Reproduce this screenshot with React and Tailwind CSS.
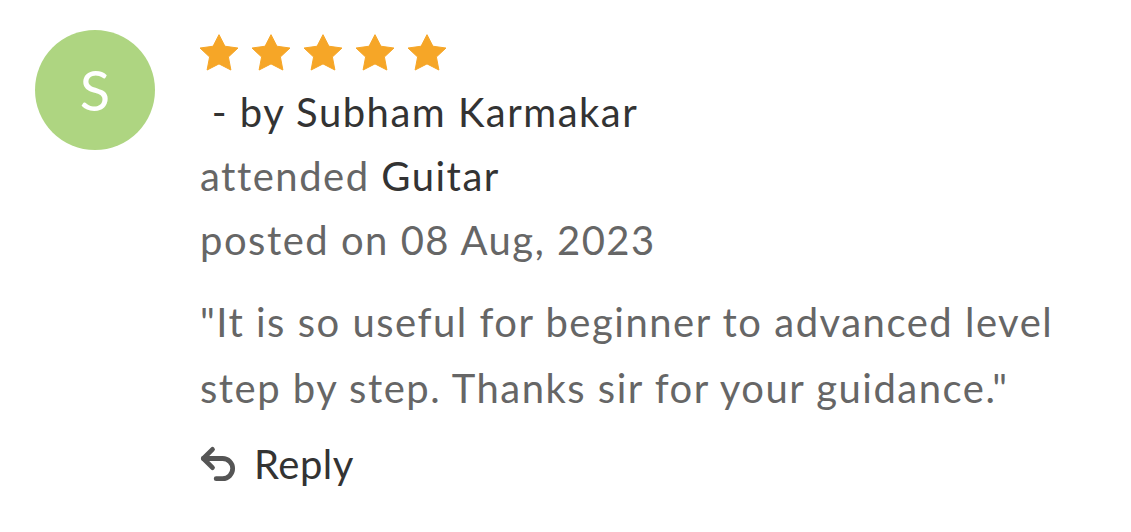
import React from "react";

function Star() {
  return (
    <svg width="40" height="38" viewBox="0 0 24 23" className="shrink-0">
      <path d="M12 0.4l3.6 7 7.9 1.1-5.8 5.4 1.5 7.9L12 18.1l-7.2 3.7 1.5-7.9L0.5 8.5l7.9-1.1z" fill="#f6a627" strokeLinejoin="round" stroke="#f6a627" strokeWidth="0.6" />
    </svg>
  );
}

export default function App() {
  return (
    <div className="w-[1131px] h-[532px] bg-white flex items-start pl-[35px] pt-[30px] gap-[45px]" style={{ fontFamily: "Lato, 'Liberation Sans', sans-serif" }}>
      <div className="w-[120px] h-[120px] rounded-full bg-[#aed581] flex items-center justify-center text-white text-[56px] font-normal shrink-0">
        S
      </div>
      <div className="flex flex-col tracking-[1.5px]">
        <div className="flex gap-[12px] mt-[4px] h-[40px] -ml-[1px]">
          <Star /><Star /><Star /><Star /><Star />
        </div>
        <div className="text-[40px] leading-[64px] text-[#333] mt-[6px]">&nbsp;- by Subham Karmakar</div>
        <div className="text-[40px] leading-[64px] text-[#666]">attended <span className="text-[#333]">Guitar</span></div>
        <div className="text-[40px] leading-[65px] text-[#666]">posted on 08 Aug, 2023</div>
        <div className="text-[40px] leading-[66px] text-[#666] mt-[16px] w-[880px]">"It is so useful for beginner to advanced level step by step. Thanks sir for your guidance."</div>
        <div className="flex items-center gap-[14px] mt-[13px] text-[#333] text-[40px] leading-[60px] tracking-[0.5px]">
          <svg width="44" height="44" viewBox="0 0 24 24" fill="none" stroke="#555" strokeWidth="2.6" strokeLinecap="round" strokeLinejoin="round" className="-ml-[4px]">
            <path d="M9 14 4 9l5-5" />
            <path d="M4 9h10.5a5.5 5.5 0 0 1 0 11H11" />
          </svg>
          <span>Reply</span>
        </div>
      </div>
    </div>
  );
}
